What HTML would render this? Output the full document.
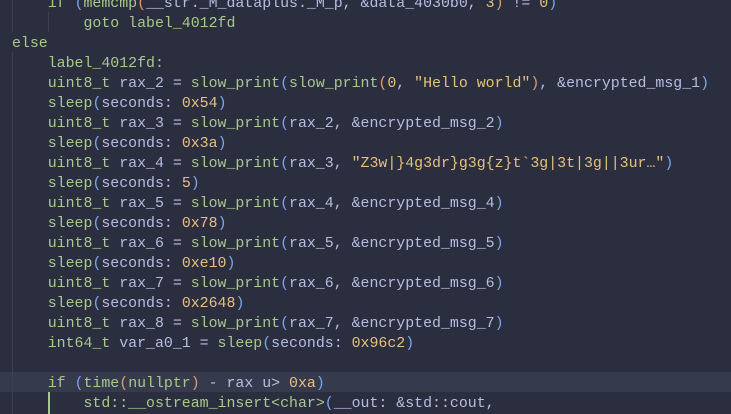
<!DOCTYPE html>
<html><head><meta charset="utf-8"><style>
html,body{margin:0;padding:0;width:731px;height:414px;overflow:hidden;background:#2b2e3f}
.c{position:absolute;left:12px;top:-6px;font-family:"Liberation Mono",monospace;font-size:14.9px;line-height:20px;color:#b6bde3}
.l{height:20px;white-space:pre}
.g{color:#a8c98b}.p{color:#7ea4ee}.o{color:#e39a6b}.n{color:#e6c17c}
.guide{position:absolute;width:1px;background:#3d4153}
.hl{position:absolute;left:0;top:372px;width:731px;height:20px;background:#363a4d}
</style></head><body>
<div class="hl"></div>
<div class="guide" style="left:12px;top:-8px;height:40px"></div>
<div class="guide" style="left:48px;top:12px;height:20px"></div>
<div class="guide" style="left:12px;top:52px;height:362px"></div>
<div class="guide" style="left:48px;top:392px;height:22px;background:#a8c98b;width:2px"></div>
<div class="c"><div class="l">    <span class="g">if</span> <span class="p">(</span><span class="g">memcmp</span><span class="o">(</span>__str._M_dataplus._M_p, &amp;data_4030b0, <span class="n">3</span><span class="o">)</span> != <span class="n">0</span><span class="p">)</span></div><div class="l">        <span class="g">goto label_4012fd</span></div><div class="l"><span class="g">else</span></div><div class="l">    <span class="g">label_4012fd:</span></div><div class="l">    <span class="g">uint8_t</span> rax_2 = <span class="g">slow_print</span><span class="p">(</span><span class="g">slow_print</span><span class="o">(</span><span class="n">0</span>, <span class="n">"Hello world"</span><span class="o">)</span>, &amp;encrypted_msg_1<span class="p">)</span></div><div class="l">    <span class="g">sleep</span><span class="p">(</span>seconds: <span class="n">0x54</span><span class="p">)</span></div><div class="l">    <span class="g">uint8_t</span> rax_3 = <span class="g">slow_print</span><span class="p">(</span>rax_2, &amp;encrypted_msg_2<span class="p">)</span></div><div class="l">    <span class="g">sleep</span><span class="p">(</span>seconds: <span class="n">0x3a</span><span class="p">)</span></div><div class="l">    <span class="g">uint8_t</span> rax_4 = <span class="g">slow_print</span><span class="p">(</span>rax_3, <span class="n">"Z3w|}4g3dr}g3g{z}t`3g|3t|3g||3ur…"</span><span class="p">)</span></div><div class="l">    <span class="g">sleep</span><span class="p">(</span>seconds: <span class="n">5</span><span class="p">)</span></div><div class="l">    <span class="g">uint8_t</span> rax_5 = <span class="g">slow_print</span><span class="p">(</span>rax_4, &amp;encrypted_msg_4<span class="p">)</span></div><div class="l">    <span class="g">sleep</span><span class="p">(</span>seconds: <span class="n">0x78</span><span class="p">)</span></div><div class="l">    <span class="g">uint8_t</span> rax_6 = <span class="g">slow_print</span><span class="p">(</span>rax_5, &amp;encrypted_msg_5<span class="p">)</span></div><div class="l">    <span class="g">sleep</span><span class="p">(</span>seconds: <span class="n">0xe10</span><span class="p">)</span></div><div class="l">    <span class="g">uint8_t</span> rax_7 = <span class="g">slow_print</span><span class="p">(</span>rax_6, &amp;encrypted_msg_6<span class="p">)</span></div><div class="l">    <span class="g">sleep</span><span class="p">(</span>seconds: <span class="n">0x2648</span><span class="p">)</span></div><div class="l">    <span class="g">uint8_t</span> rax_8 = <span class="g">slow_print</span><span class="p">(</span>rax_7, &amp;encrypted_msg_7<span class="p">)</span></div><div class="l">    <span class="g">int64_t</span> var_a0_1 = <span class="g">sleep</span><span class="p">(</span>seconds: <span class="n">0x96c2</span><span class="p">)</span></div><div class="l"> </div><div class="l">    <span class="g">if</span> <span class="p">(</span><span class="g">time</span><span class="o">(</span><span class="g">nullptr</span><span class="o">)</span> - rax u&gt; <span class="n">0xa</span><span class="p">)</span></div><div class="l">        <span class="g">std::__ostream_insert&lt;char&gt;</span><span class="p">(</span>__out: &amp;std::cout,</div></div>
</body></html>
